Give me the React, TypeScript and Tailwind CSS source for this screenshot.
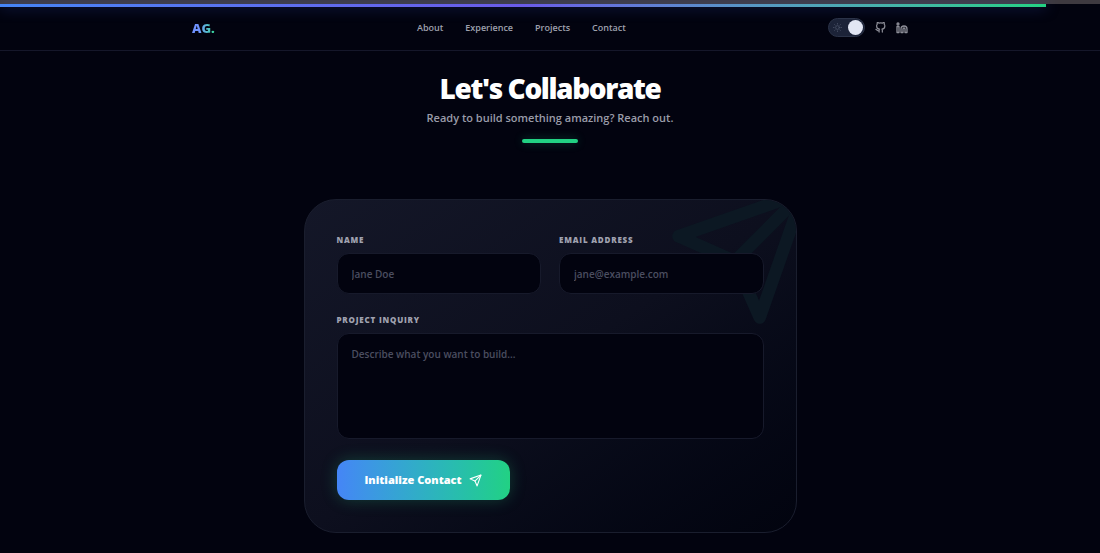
import { FiGithub, FiLinkedin, FiSend, FiSun } from 'react-icons/fi';

const links = ['About', 'Experience', 'Projects', 'Contact'];
const label = 'block text-[8px] leading-[14px] font-extrabold tracking-widest text-[#a0a2b0] uppercase';
const field =
  'mt-1.5 block w-full resize-none rounded-xl border border-[#171a2b] bg-[#02030f] px-3.5 text-[10px] leading-4 font-semibold text-white placeholder:text-[#4b4e60] outline-none';

export default function App() {
  return (
    <div className="min-h-screen bg-[#02030f] font-['Open_Sans','Noto_Sans',sans-serif] text-white">
      <div className="h-1 bg-[#3e3a40]" />
      <div className="h-[3px] w-[95.1%] bg-linear-to-r from-[#4585f6] via-[#6a5be8] to-[#22d183] shadow-[0_0_14px_rgba(69,110,246,0.5)]" />
      <header className="flex h-11 items-center justify-center border-b border-[#15172a] pb-0.5">
        <div className="flex w-[716px] items-center justify-between">
          <a href="#top" className="bg-linear-to-r from-[#6f92ff] from-30% to-[#2fdc92] bg-clip-text text-[13px] leading-5 font-extrabold text-transparent">AG.</a>
          <nav className="flex gap-[22px] text-[9px] leading-4 font-semibold text-[#9fa1ae]">
            {links.map((l) => (
              <a key={l} href={`#${l.toLowerCase()}`}>{l}</a>
            ))}
          </nav>
          <div className="flex items-center gap-[10px] text-[#8d8e98]">
            <button type="button" role="switch" aria-checked="true" aria-label="Dark mode" className="flex h-[19px] w-[37px] items-center justify-between rounded-full border border-[#2b3348] bg-[#1c2338] pr-px pl-1">
              <FiSun size={9} className="text-[#4c546a]" />
              <span className="size-[15px] rounded-full bg-[#e2e6f3]" />
            </button>
            <a href="#github" aria-label="GitHub"><FiGithub size={11} strokeWidth={2.6} /></a>
            <a href="#linkedin" aria-label="LinkedIn"><FiLinkedin size={12} strokeWidth={2.6} /></a>
          </div>
        </div>
      </header>
      <main className="flex flex-col items-center px-4 pt-[19px] pb-5">
        <h1 className="text-[28px] leading-9 font-extrabold tracking-tighter">Let's Collaborate</h1>
        <p className="mt-1 text-[11px] leading-4 font-semibold text-[#9a9ca9]">Ready to build something amazing? Reach out.</p>
        <div className="mt-[13px] h-1 w-14 rounded-full bg-[#22d183] shadow-[0_0_10px_rgba(34,209,131,0.3)]" />
        <form className="relative mt-14 w-full max-w-[493px] overflow-hidden rounded-[32px] border border-[#1a1e2e] bg-linear-to-br from-[#141728] via-[#0d0f1e] to-[#02040f] p-8 pt-[33px]" onSubmit={(e) => e.preventDefault()}>
          <FiSend size={150} className="absolute -top-5 -right-5 text-[#0c1823]" />
          <div className="relative grid grid-cols-2 gap-[18px]">
            <div>
              <label htmlFor="name" className={label}>Name</label>
              <input id="name" placeholder="Jane Doe" className={`${field} h-[41px]`} />
            </div>
            <div>
              <label htmlFor="email" className={label}>Email Address</label>
              <input id="email" type="email" placeholder="jane@example.com" className={`${field} h-[41px]`} />
            </div>
          </div>
          <div className="relative mt-[19px]">
            <label htmlFor="inquiry" className={label}>Project Inquiry</label>
            <textarea id="inquiry" placeholder="Describe what you want to build..." className={`${field} h-[106px] py-3`} />
          </div>
          <button type="submit" className="relative mt-[21px] flex h-10 items-center gap-[7px] rounded-xl bg-linear-to-r from-[#4585f6] to-[#22d183] px-7 text-[11px] leading-4 font-extrabold shadow-[0_0_16px_rgba(34,209,131,0.25)]">
            Initialize Contact
            <FiSend size={13} />
          </button>
        </form>
      </main>
    </div>
  );
}
